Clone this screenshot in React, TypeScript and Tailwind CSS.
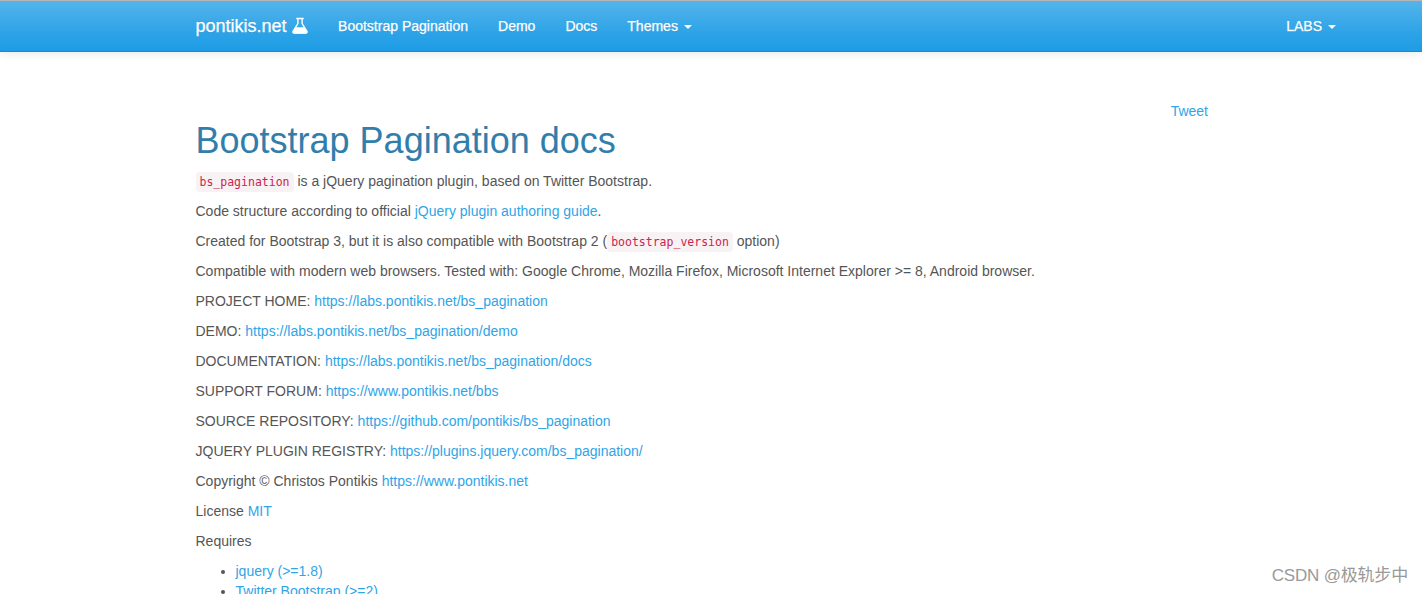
import type { ReactNode } from "react";

const links: [string, string][] = [
  ["PROJECT HOME:", "https://labs.pontikis.net/bs_pagination"],
  ["DEMO:", "https://labs.pontikis.net/bs_pagination/demo"],
  ["DOCUMENTATION:", "https://labs.pontikis.net/bs_pagination/docs"],
  ["SUPPORT FORUM:", "https://www.pontikis.net/bbs"],
  ["SOURCE REPOSITORY:", "https://github.com/pontikis/bs_pagination"],
  ["JQUERY PLUGIN REGISTRY:", "https://plugins.jquery.com/bs_pagination/"],
  ["Copyright © Christos Pontikis", "https://www.pontikis.net"],
  ["License", "MIT"],
];

function Link({ children }: { children: ReactNode }) {
  return <a href="#" className="text-[#2fa4e7]">{children}</a>;
}

function Code({ children }: { children: ReactNode }) {
  return (
    <code className="rounded bg-[#f9f2f4] px-1 py-[3px] font-['DejaVu_Sans_Mono',monospace] text-[11.5px] leading-[14px] text-[#c7254e]">
      {children}
    </code>
  );
}

function Caret() {
  return <span className="ml-1.5 mt-0.5 inline-block border-x-4 border-t-4 border-x-transparent border-t-white" />;
}

function Flask() {
  return (
    <svg width="16" height="17" viewBox="0 0 16 17" className="mb-[2px] ml-[5px]" fill="none">
      <path d="M4.3 1.5h7.4M5.9 1.5v5L1.2 14c-.7 1.2-.2 2 1 2h11.6c1.2 0 1.7-.8 1-2L10.1 6.5v-5" stroke="#fff" strokeWidth="1.4" />
      <path d="M3.9 10.3h8.2l2.9 4.3c.5.9 0 1.9-.9 1.9H1.9c-.9 0-1.4-1-.9-1.9z" fill="#fff" />
    </svg>
  );
}

export default function App() {
  return (
    <div className="relative h-[594px] w-full overflow-hidden bg-white font-['Liberation_Sans',Arial,sans-serif] text-sm leading-5 text-[#555]">
      <header className="h-[52px] border-t border-b border-t-[#b5b5b5] border-b-[#178acc] bg-[linear-gradient(#54b4eb,#2fa4e7_60%,#1d9ce5)] shadow-[0_1px_10px_rgba(0,0,0,0.1)]">
        <nav className="flex h-[50px] items-center pr-[86px] pl-[195.5px] text-white [-webkit-text-stroke:0.25px_white] [text-shadow:0_1px_0_rgba(0,0,0,0.1)]">
          <a href="#" className="mr-[30.5px] flex items-center text-lg">
            pontikis.net
            <Flask />
          </a>
          <div className="flex gap-[30px]">
            <a href="#">Bootstrap Pagination</a>
            <a href="#">Demo</a>
            <a href="#">Docs</a>
            <a href="#" className="flex items-center">Themes<Caret /></a>
          </div>
          <a href="#" className="ml-auto flex items-center">LABS<Caret /></a>
        </nav>
      </header>

      <div className="flex justify-between pt-[49px] pr-[214px] pl-[195.5px]">
        <main>
          <h1 className="mt-5 mb-[10.4px] text-[36px] leading-[39.6px] text-[#317eac]">Bootstrap Pagination docs</h1>
          <div className="flex flex-col gap-2.5">
            <p><Code>bs_pagination</Code> is a jQuery pagination plugin, based on Twitter Bootstrap.</p>
            <p>Code structure according to official <Link>jQuery plugin authoring guide</Link>.</p>
            <p>Created for Bootstrap 3, but it is also compatible with Bootstrap 2 (<Code>bootstrap_version</Code> option)</p>
            <p>Compatible with modern web browsers. Tested with: Google Chrome, Mozilla Firefox, Microsoft Internet Explorer &gt;= 8, Android browser.</p>
            {links.map(([label, url]) => (
              <p key={label}>{label} <Link>{url}</Link></p>
            ))}
            <p>Requires</p>
            <ul className="list-disc pl-10">
              <li><Link>jquery (&gt;=1.8)</Link></li>
              <li><Link>Twitter Bootstrap (&gt;=2)</Link></li>
            </ul>
          </div>
        </main>
        <aside><Link>Tweet</Link></aside>
      </div>

      <div className="absolute right-[14px] bottom-[6px] text-[17px] leading-6 tracking-[-0.18px] whitespace-nowrap text-[#999] font-['Liberation_Sans','Noto_Sans_CJK_SC',sans-serif]">
        CSDN @极轨步中
      </div>
    </div>
  );
}
